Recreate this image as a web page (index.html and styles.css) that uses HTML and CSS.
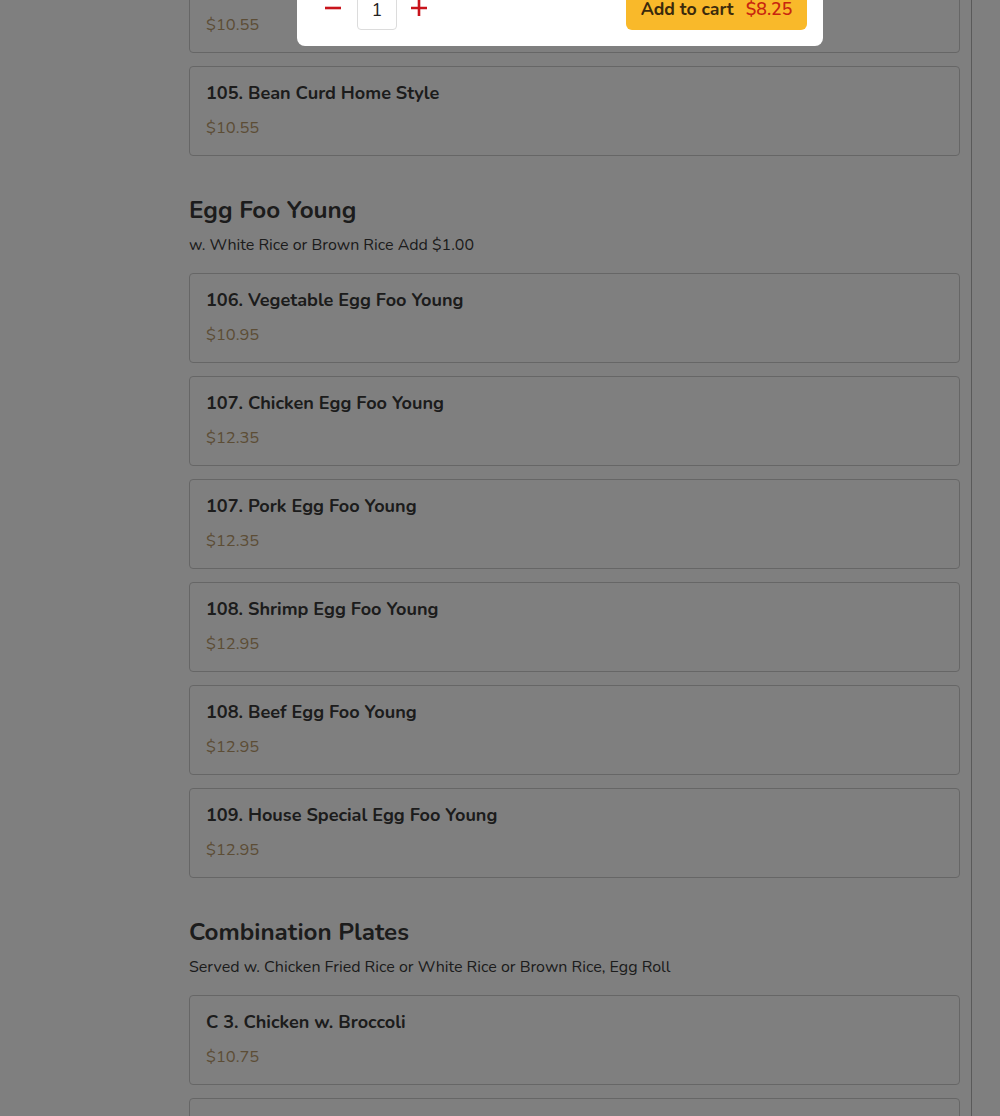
FILE: index.html
```html
<!DOCTYPE html>
<html>
<head>
<meta charset="utf-8">
<link rel="stylesheet" href="styles.css">
</head>
<body>
<div class="page">
  <aside class="sidebar"></aside>
  <main class="main">
    <div class="scroll">
      <div class="list">
        <div class="card"><div class="name">104. Bean Curd Szechuan Style</div><div class="price">$10.55</div></div>
        <div class="card"><div class="name">105. Bean Curd Home Style</div><div class="price">$10.55</div></div>
      </div>

      <section class="section">
        <h2 class="sec-title">Egg Foo Young</h2>
        <p class="sec-desc">w. White Rice or Brown Rice Add $1.00</p>
        <div class="list">
          <div class="card"><div class="name">106. Vegetable Egg Foo Young</div><div class="price">$10.95</div></div>
          <div class="card"><div class="name">107. Chicken Egg Foo Young</div><div class="price">$12.35</div></div>
          <div class="card"><div class="name">107. Pork Egg Foo Young</div><div class="price">$12.35</div></div>
          <div class="card"><div class="name">108. Shrimp Egg Foo Young</div><div class="price">$12.95</div></div>
          <div class="card"><div class="name">108. Beef Egg Foo Young</div><div class="price">$12.95</div></div>
          <div class="card"><div class="name">109. House Special Egg Foo Young</div><div class="price">$12.95</div></div>
        </div>
      </section>

      <section class="section">
        <h2 class="sec-title">Combination Plates</h2>
        <p class="sec-desc">Served w. Chicken Fried Rice or White Rice or Brown Rice, Egg Roll</p>
        <div class="list">
          <div class="card"><div class="name">C 3. Chicken w. Broccoli</div><div class="price">$10.75</div></div>
          <div class="card"><div class="name">C 4. Chicken w. Mixed Vegetables</div><div class="price">$10.75</div></div>
        </div>
      </section>
    </div>
  </main>
  <aside class="cart"></aside>
</div>

<div class="overlay"></div>

<div class="modal">
  <div class="modal-footer">
    <div class="qty">
      <button class="qty-btn" aria-label="decrease">
        <svg width="18" height="18" viewBox="0 0 18 18"><path d="M1 9h16" stroke="#c8141c" stroke-width="2.6" stroke-linecap="butt"/></svg>
      </button>
      <div class="qty-input">1</div>
      <button class="qty-btn" aria-label="increase">
        <svg width="18" height="18" viewBox="0 0 18 18"><path d="M1 9h16M9 1v16" stroke="#c8141c" stroke-width="2.6" stroke-linecap="butt"/></svg>
      </button>
    </div>
    <button class="add-btn"><span class="add-label">Add to cart</span><span class="add-price">$8.25</span></button>
  </div>
</div>
</body>
</html>
```

FILE: styles.css
```css
* { box-sizing: border-box; }
html, body {
  margin: 0;
  padding: 0;
  height: 100%;
  overflow: hidden;
}
body {
  background: #fff;
  font-family: "Nunito", "Lato", "Noto Sans", sans-serif;
  color: #383838;
}
.page {
  display: flex;
  height: 1116px;
}
.sidebar {
  width: 189px;
  flex: none;
}
.main {
  width: 771px;
  flex: none;
  overflow: hidden;
}
.scroll {
  margin-top: -37px;
}
.cart {
  margin-left: 11px;
  flex: 1;
  border-left: 1px solid #b4b4b4;
}
.list {
  display: flex;
  flex-direction: column;
  gap: 13px;
}
.card {
  height: 90px;
  border: 1px solid #cccccc;
  border-radius: 4px;
  padding: 15px 16px;
  display: flex;
  flex-direction: column;
  gap: 12px;
}
.name {
  font-size: 18.1px;
  line-height: 22px;
  font-weight: 700;
  color: #383838;
}
.price {
  font-size: 16.5px;
  line-height: 24px;
  color: #b99a6c;
}
.section {
  margin-top: 39px;
}
.sec-title {
  margin: 0;
  font-size: 24.2px;
  line-height: 32px;
  font-weight: 700;
  color: #383838;
}
.sec-desc {
  margin: 6px 0 16px;
  font-size: 16px;
  line-height: 24px;
  color: #383838;
}
.overlay {
  position: fixed;
  inset: 0;
  background: rgba(0, 0, 0, 0.5);
}
.modal {
  position: fixed;
  left: 297px;
  top: -30px;
  width: 526px;
  background: #fff;
  border-radius: 0 0 8px 8px;
  padding: 16px 16px 16px 18px;
}
.modal-footer {
  display: flex;
  align-items: center;
  justify-content: space-between;
  height: 44px;
}
.qty {
  display: flex;
  align-items: center;
}
.qty-btn {
  width: 36px;
  height: 36px;
  border: none;
  background: transparent;
  padding: 0;
  display: flex;
  align-items: center;
  justify-content: center;
  cursor: pointer;
}
.qty-btn:first-child { margin-right: 6px; }
.qty-btn:last-child { margin-left: 4px; }
.qty-input {
  width: 40px;
  height: 44px;
  padding-top: 4px;
  border: 1px solid #dcdcdc;
  border-radius: 4px;
  display: flex;
  align-items: center;
  justify-content: center;
  font-size: 18px;
  color: #222;
}
.add-btn {
  height: 44px;
  width: 181px;
  border: none;
  border-radius: 6px;
  background: #f9b92a;
  font-family: inherit;
  font-size: 17.7px;
  font-weight: 700;
  display: flex;
  align-items: center;
  justify-content: center;
  gap: 12px;
  padding: 2px 0 0;
}
.add-label { color: #3b2a0c; }
.add-price { color: #c8250f; font-weight: 600; }
```
